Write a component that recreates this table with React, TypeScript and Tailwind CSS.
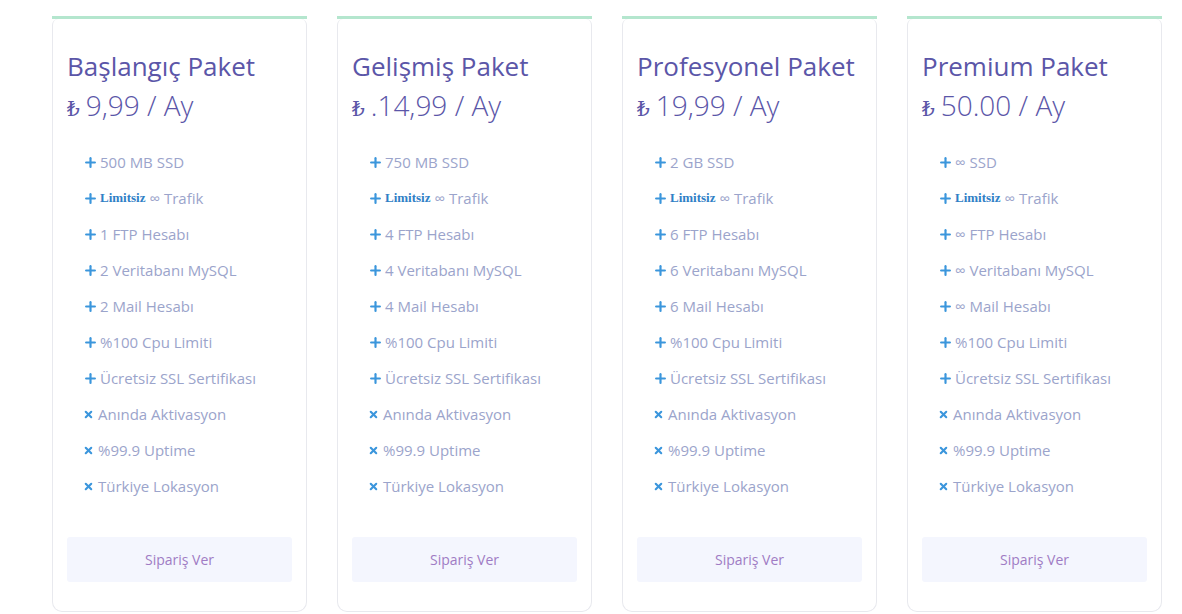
import { Plus, X } from "lucide-react";

type Feature = { icon: "plus" | "x"; text: string; limitsiz?: boolean };

const makeFeatures = (ssd: string, ftp: string, db: string, mail: string): Feature[] => [
  { icon: "plus", text: ssd },
  { icon: "plus", text: "∞ Trafik", limitsiz: true },
  { icon: "plus", text: ftp },
  { icon: "plus", text: db },
  { icon: "plus", text: mail },
  { icon: "plus", text: "%100 Cpu Limiti" },
  { icon: "plus", text: "Ücretsiz SSL Sertifikası" },
  { icon: "x", text: "Anında Aktivasyon" },
  { icon: "x", text: "%99.9 Uptime" },
  { icon: "x", text: "Türkiye Lokasyon" },
];

const plans = [
  {
    name: "Başlangıç Paket",
    price: "9,99",
    features: makeFeatures("500 MB SSD", "1 FTP Hesabı", "2 Veritabanı MySQL", "2 Mail Hesabı"),
  },
  {
    name: "Gelişmiş Paket",
    price: ".14,99",
    features: makeFeatures("750 MB SSD", "4 FTP Hesabı", "4 Veritabanı MySQL", "4 Mail Hesabı"),
  },
  {
    name: "Profesyonel Paket",
    price: "19,99",
    features: makeFeatures("2 GB SSD", "6 FTP Hesabı", "6 Veritabanı MySQL", "6 Mail Hesabı"),
  },
  {
    name: "Premium Paket",
    price: "50.00",
    features: makeFeatures("∞ SSD", "∞ FTP Hesabı", "∞ Veritabanı MySQL", "∞ Mail Hesabı"),
  },
];

const PlanCard = ({ plan }: { plan: (typeof plans)[number] }) => (
  <div className="w-[255px] flex-shrink-0">
    <div className="h-[3px] bg-[#b4e6ce]" />
    <div className="bg-white border border-t-0 border-[#e8e9ee] rounded-b-[10px] rounded-t-[6px] px-[14px] pt-[32px] pb-[29px]">
      <h3 className="text-[26px] leading-[31px] text-[#5b56a8] font-normal">{plan.name}</h3>
      <div className="mt-[6px] flex items-baseline text-[#5b56a8] leading-[34px]">
        <span className="text-[20px] mr-[6px] font-light font-['DejaVu_Serif',serif]">₺</span>
        <span className="text-[28px] font-light">{plan.price} / Ay</span>
      </div>
      <ul className="mt-[18px] pl-[16px]">
        {plan.features.map((f, i) => (
          <li key={i} className="h-[36px] flex items-center text-[15px] text-[#9ba4cb]">
            {f.icon === "plus" ? (
              <Plus size={15} strokeWidth={3.5} className="text-[#3b96dc] mr-[2px] flex-shrink-0" />
            ) : (
              <X size={11} strokeWidth={4.5} className="text-[#3b96dc] mr-[4px] flex-shrink-0" />
            )}
            {f.limitsiz && (
              <span className="font-['Liberation_Serif',serif] font-bold text-[13px] text-[#2f80c6] mr-[4px]">
                Limitsiz
              </span>
            )}
            <span>{f.text}</span>
          </li>
        ))}
      </ul>
      <button className="mt-[33px] w-full h-[45px] bg-[#f4f6fe] rounded-[3px] text-[14px] text-[#a07cc4]">
        Sipariş Ver
      </button>
    </div>
  </div>
);

export default function App() {
  return (
    <div className="min-h-[614px] bg-white font-['Open_Sans',sans-serif] pl-[52px] pt-[16px] flex gap-[30px]">
      {plans.map((p) => (
        <PlanCard key={p.name} plan={p} />
      ))}
    </div>
  );
}
